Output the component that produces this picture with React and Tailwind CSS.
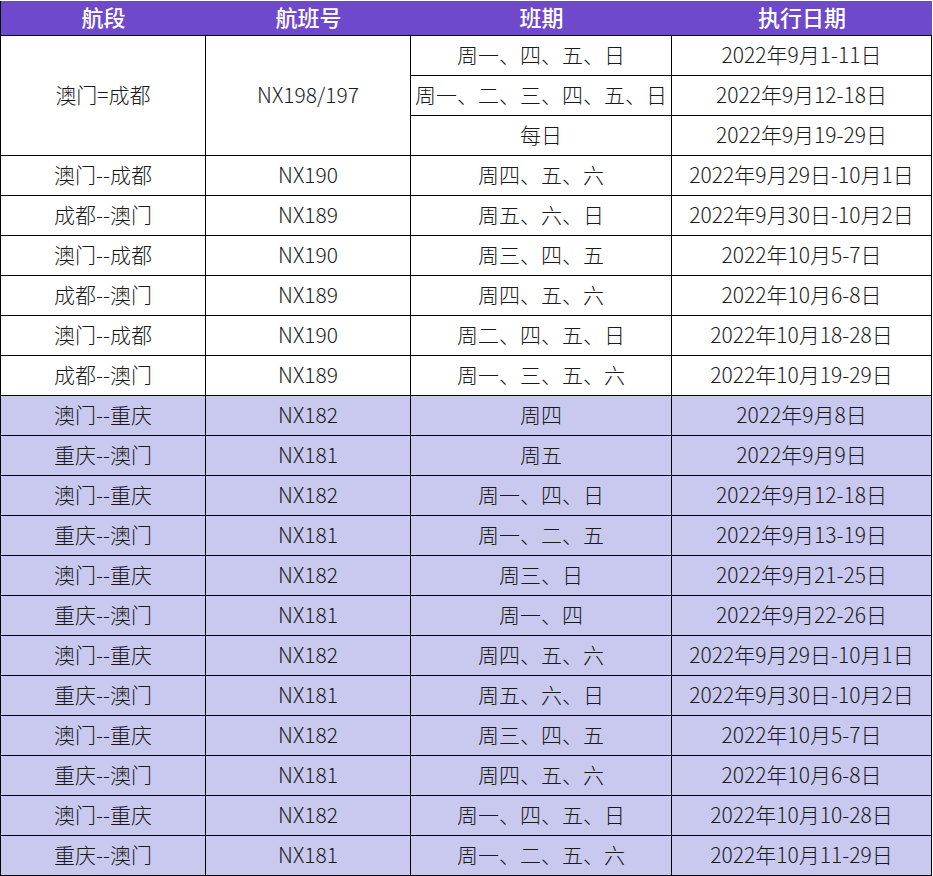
import React from "react";

const topRows = [
    ["澳门--成都", "NX190", "周四、五、六", "2022年9月29日-10月1日"],
    ["成都--澳门", "NX189", "周五、六、日", "2022年9月30日-10月2日"],
    ["澳门--成都", "NX190", "周三、四、五", "2022年10月5-7日"],
    ["成都--澳门", "NX189", "周四、五、六", "2022年10月6-8日"],
    ["澳门--成都", "NX190", "周二、四、五、日", "2022年10月18-28日"],
    ["成都--澳门", "NX189", "周一、三、五、六", "2022年10月19-29日"],
];

const purpleRows = [
    ["澳门--重庆", "NX182", "周四", "2022年9月8日"],
    ["重庆--澳门", "NX181", "周五", "2022年9月9日"],
    ["澳门--重庆", "NX182", "周一、四、日", "2022年9月12-18日"],
    ["重庆--澳门", "NX181", "周一、二、五", "2022年9月13-19日"],
    ["澳门--重庆", "NX182", "周三、日", "2022年9月21-25日"],
    ["重庆--澳门", "NX181", "周一、四", "2022年9月22-26日"],
    ["澳门--重庆", "NX182", "周四、五、六", "2022年9月29日-10月1日"],
    ["重庆--澳门", "NX181", "周五、六、日", "2022年9月30日-10月2日"],
    ["澳门--重庆", "NX182", "周三、四、五", "2022年10月5-7日"],
    ["重庆--澳门", "NX181", "周四、五、六", "2022年10月6-8日"],
    ["澳门--重庆", "NX182", "周一、四、五、日", "2022年10月10-28日"],
    ["重庆--澳门", "NX181", "周一、二、五、六", "2022年10月11-29日"],
];

const cell = "flex items-center justify-center h-[40px] pb-[3px] border-r border-b border-black whitespace-nowrap";

function Row({ data, purple }) {
    const bg = purple ? "bg-[#c9c8ef]" : "bg-white";
    return data.map((text, i) => (
        <div key={i} className={`${cell} ${bg}`}>
            {text}
        </div>
    ));
}

export default function App() {
    return (
        <div className="bg-white w-[933px] h-[876px] pt-px font-['Noto_Sans_CJK_SC',sans-serif] font-light text-[21px] text-[#1a1a1a] leading-none">
            <div className="grid grid-cols-[205px_205px_261px_260px] w-[932px] border-l border-black">
                {/* Header */}
                {["航段", "航班号", "班期", "执行日期"].map((h) => (
                    <div
                        key={h}
                        className="flex items-center justify-center h-[35px] pb-[4px] bg-[#6f49cb] border-b border-black font-medium text-white text-[22px]"
                    >
                        {h}
                    </div>
                ))}

                {/* Macau = Chengdu block */}
                <div className="row-span-3 flex items-center justify-center pb-[3px] border-r border-b border-black">
                    澳门=成都
                </div>
                <div className="row-span-3 flex items-center justify-center pb-[3px] border-r border-b border-black">
                    NX198/197
                </div>
                <div className={cell}>周一、四、五、日</div>
                <div className={cell}>2022年9月1-11日</div>
                <div className={cell}>周一、二、三、四、五、日</div>
                <div className={cell}>2022年9月12-18日</div>
                <div className={cell}>每日</div>
                <div className={cell}>2022年9月19-29日</div>

                {topRows.map((r, i) => (
                    <Row key={`t${i}`} data={r} />
                ))}
                {purpleRows.map((r, i) => (
                    <Row key={`p${i}`} data={r} purple />
                ))}
            </div>
        </div>
    );
}
